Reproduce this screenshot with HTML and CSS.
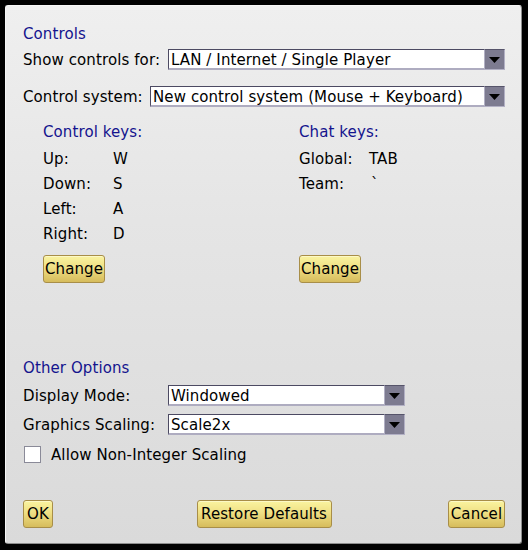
FILE: index.html
```html
<!DOCTYPE html>
<html>
<head>
<meta charset="utf-8">
<link rel="stylesheet" href="styles.css">
</head>
<body>
<div class="panel">
  <div class="heading">Controls</div>
  <div class="row row-first">
    <span class="label label-first">Show controls for:</span>
    <div class="select select-wide">
      <span class="sel-text">LAN / Internet / Single Player</span>
      <span class="sel-btn"><svg width="11" height="6" viewBox="0 0 11 6"><path d="M0 0H11L5.5 6Z" fill="#000"/></svg></span>
    </div>
  </div>
  <div class="row row-second">
    <span class="label label-second">Control system:</span>
    <div class="select select-wide">
      <span class="sel-text">New control system (Mouse + Keyboard)</span>
      <span class="sel-btn"><svg width="11" height="6" viewBox="0 0 11 6"><path d="M0 0H11L5.5 6Z" fill="#000"/></svg></span>
    </div>
  </div>
  <div class="keys">
    <div class="keycol keycol-left">
      <div class="subheading">Control keys:</div>
      <div class="keygrid">
        <span>Up:</span><span>W</span>
        <span>Down:</span><span>S</span>
        <span>Left:</span><span>A</span>
        <span>Right:</span><span>D</span>
      </div>
      <button class="btn btn-change">Change</button>
    </div>
    <div class="keycol">
      <div class="subheading">Chat keys:</div>
      <div class="keygrid">
        <span>Global:</span><span>TAB</span>
        <span>Team:</span><span class="tick">`</span>
        <span>&nbsp;</span><span></span>
        <span>&nbsp;</span><span></span>
      </div>
      <button class="btn btn-change">Change</button>
    </div>
  </div>
  <div class="heading heading-other">Other Options</div>
  <div class="optgrid">
    <span class="label">Display Mode:</span>
    <div class="select select-opt">
      <span class="sel-text">Windowed</span>
      <span class="sel-btn"><svg width="11" height="6" viewBox="0 0 11 6"><path d="M0 0H11L5.5 6Z" fill="#000"/></svg></span>
    </div>
    <span class="label">Graphics Scaling:</span>
    <div class="select select-opt">
      <span class="sel-text">Scale2x</span>
      <span class="sel-btn"><svg width="11" height="6" viewBox="0 0 11 6"><path d="M0 0H11L5.5 6Z" fill="#000"/></svg></span>
    </div>
  </div>
  <div class="check-row">
    <span class="checkbox"></span>
    <span class="check-label">Allow Non-Integer Scaling</span>
  </div>
  <div class="footer">
    <button class="btn btn-ok">OK</button>
    <button class="btn btn-restore">Restore Defaults</button>
    <button class="btn btn-cancel">Cancel</button>
  </div>
</div>
</body>
</html>
```

FILE: styles.css
```css
html, body {
  margin: 0;
  padding: 0;
  background: #000;
}
body {
  width: 528px;
  height: 550px;
  font-family: "DejaVu Sans", Verdana, sans-serif;
  font-size: 15px;
  letter-spacing: 0.1px;
  line-height: 18px;
  color: #000;
  overflow: hidden;
}
.panel {
  margin: 5px 0 0 5px;
  width: 517px;
  height: 539px;
  box-sizing: border-box;
  padding: 19px 16px 0 17px;
  background: linear-gradient(#efefef, #e5e5e5 40%, #dadada);
  border-top: 1px solid #f6f6f6;
  border-left: 1px solid #f6f6f6;
  border-right: 1px solid #8c8c8c;
  border-bottom: 1px solid #8c8c8c;
  border-radius: 3px;
}
.heading {
  color: #14148e;
  height: 18px;
}
.row {
  display: flex;
  align-items: baseline;
}
.row-first { margin-top: 6px; }
.row-second { margin-top: 16px; }
.label {
  white-space: nowrap;
}
.label-first { width: 145px; flex: none; }
.label-second { width: 127px; flex: none; }
.select {
  display: flex;
  height: 21px;
  box-sizing: border-box;
  background: #fff;
  border-top: 1px solid #4c4a62;
  border-left: 1px solid #4c4a62;
  border-bottom: 2px solid #aeacc0;
}
.select-wide { flex: 1; }
.sel-text {
  flex: 1;
  padding: 1px 0 0 2px;
  white-space: nowrap;
  overflow: hidden;
}
.sel-btn {
  width: 21px;
  height: 21px;
  margin-top: -1px;
  margin-bottom: -2px;
  box-sizing: border-box;
  background: #7d7b90;
  border: 1px solid #b2b0c4;
  border-top-color: #56546a;
  display: flex;
  align-items: center;
  justify-content: center;
}
.sel-btn svg { display: block; margin-top: 1px; }
.keys {
  display: flex;
  margin-top: 13px;
  padding-left: 20px;
}
.keycol {
  flex: 1;
  display: flex;
  flex-direction: column;
  align-items: flex-start;
}
.keycol-left {
  flex: none;
  width: 256px;
}
.subheading {
  color: #14148e;
  line-height: 25px;
}
.keygrid {
  margin-top: 2px;
  display: grid;
  grid-template-columns: 70px auto;
  grid-auto-rows: 25px;
  line-height: 25px;
}
.tick { padding-left: 2px; }
.btn {
  font-family: "DejaVu Sans", Verdana, sans-serif;
  font-size: 15px;
  letter-spacing: 0.1px;
  line-height: 18px;
  color: #000;
  height: 28px;
  box-sizing: border-box;
  padding: 0;
  border: 1px solid #a88e48;
  border-radius: 3px;
  background: linear-gradient(#faf4a0, #efdf84 45%, #d6bc5c);
  box-shadow: inset 0 1px 0 #fdf9c4;
}
.btn-change {
  margin-top: 8px;
  width: 62px;
}
.heading-other {
  margin-top: 76px;
}
.optgrid {
  margin-top: 8px;
  display: grid;
  grid-template-columns: 145px 237px;
  row-gap: 8px;
  align-items: baseline;
}
.select-opt { width: 237px; }
.check-row {
  margin-top: 11px;
  display: flex;
  align-items: center;
  height: 17px;
}
.checkbox {
  width: 17px;
  height: 17px;
  box-sizing: border-box;
  margin-left: 1px;
  background: #fff;
  border: 1px solid #8a8a98;
}
.check-label {
  margin-left: 10px;
  margin-top: 1px;
}
.footer {
  margin-top: 37px;
  display: flex;
  justify-content: space-between;
  align-items: flex-start;
}
.btn-ok { width: 30px; }
.btn-restore { width: 135px; margin-left: 27px; }
.btn-cancel { width: 57px; }
```
